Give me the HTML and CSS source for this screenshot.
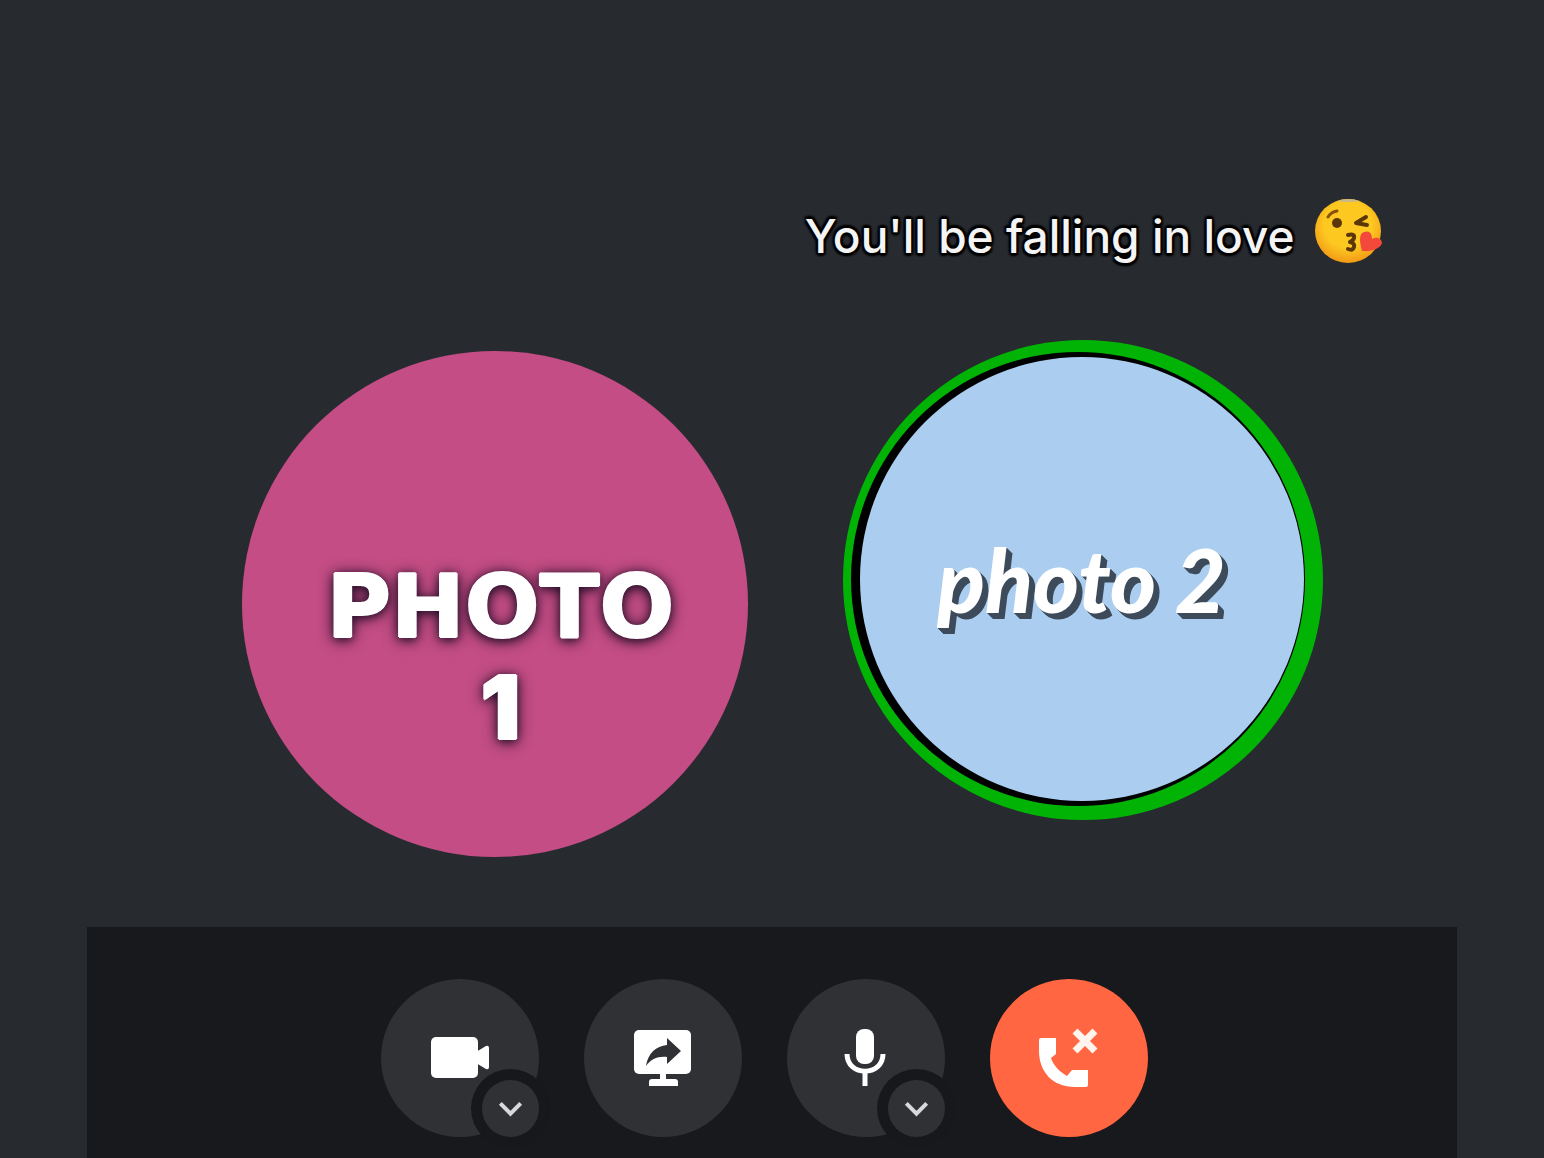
FILE: index.html
```html
<!DOCTYPE html>
<html lang="en">
<head>
<meta charset="utf-8">
<meta name="viewport" content="width=device-width, initial-scale=1">
<title>Video call</title>
<link rel="stylesheet" href="styles.css">
</head>
<body>
<main class="stage">
  <section class="person">
    <div class="avatar avatar-pink"><span>PHOTO</span><span class="digit">1</span></div>
  </section>
  <section class="person person-speaking">
    <p class="caption"><span class="caption-text">You'll be falling in love</span>
      <svg class="emoji" viewBox="0 0 68 68" role="img" aria-label="Face blowing a kiss">
        <defs><radialGradient id="face" cx=".5" cy=".4" r=".6"><stop offset=".6" stop-color="#fdc921"/><stop offset="1" stop-color="#f39a16"/></radialGradient></defs>
        <ellipse cx="33" cy="33" rx="33" ry="32" fill="url(#face)"/>
        <path d="M22 3Q33-1 45 3Q33 5 22 3Z" fill="#c9b98a"/>
        <path d="M13 19Q16 14 22 13" fill="none" stroke="#8a5208" stroke-width="3" stroke-linecap="round"/>
        <ellipse cx="22" cy="25" rx="5" ry="5" fill="#5b3607"/>
        <path d="M51 19L41 25L52 27" fill="none" stroke="#5b3607" stroke-width="4" stroke-linecap="round" stroke-linejoin="round"/>
        <path d="M33 37Q40 35 39 40Q38 43 35 44Q40 45 39 49Q38 53 33 51" fill="none" stroke="#5b3607" stroke-width="4" stroke-linecap="round" stroke-linejoin="round"/>
        <path d="M47 53C45 46 43 36 49 34C54 32 57 35 57 41C62 38 67 41 67 45C66 50 57 54 47 53Z" fill="#f2493b"/>
      </svg>
    </p>
    <div class="ring"><div class="rim"><div class="avatar avatar-blue"><span>photo 2</span></div></div></div>
  </section>
</main>
<footer class="controls">
  <div class="control">
    <button class="round" type="button" aria-label="Camera">
      <svg viewBox="0 0 158 158"><rect x="50" y="58" width="47" height="41" rx="5"/><path d="M95 73L105 67Q108 66 108 69V88Q108 91 105 90L95 84Z"/></svg>
    </button>
    <button class="more" type="button" aria-label="Camera options">
      <svg viewBox="0 0 56 56"><path class="chevron" d="M18 23L28 33L38 23"/></svg>
    </button>
  </div>
  <div class="control">
    <button class="round" type="button" aria-label="Share screen">
      <svg viewBox="0 0 158 158"><rect x="50" y="51" width="57" height="44" rx="5"/><path d="M76 94H82V100H91Q94 100 94 103V107H65V103Q65 100 68 100H76Z"/><path class="arrow" d="M62 87C64 74 72 67 83 66V59L97 72L83 85V78C74 77 67 80 62 87Z"/></svg>
    </button>
  </div>
  <div class="control">
    <button class="round" type="button" aria-label="Microphone">
      <svg viewBox="0 0 158 158"><rect x="69" y="50" width="18" height="35" rx="8"/><path class="line" d="M60 75C60 98 96 98 96 75M78 92V107"/></svg>
    </button>
    <button class="more" type="button" aria-label="Microphone options">
      <svg viewBox="0 0 56 56"><path class="chevron" d="M18 23L28 33L38 23"/></svg>
    </button>
  </div>
  <div class="control">
    <button class="round hang-up" type="button" aria-label="Leave call">
      <svg viewBox="0 0 158 158"><path d="M51 59H66V75L61 79C63 86 70 93 77 97L82 91H98V106Q98 108 96 108H85C63 108 49 93 49 72V61Q49 59 51 59Z"/><path class="cross" d="M85 52L105 72M105 52L85 72"/></svg>
    </button>
  </div>
</footer>
</body>
</html>
```
FILE: styles.css
```css
* {
  box-sizing: border-box;
}

body {
  margin: 0;
  min-height: 100vh;
  display: flex;
  flex-direction: column;
  background: #272a2f;
  color: #fff;
  font-family: Inter, "Liberation Sans", sans-serif;
}

.stage {
  flex: 1;
  display: flex;
  justify-content: center;
  align-items: flex-end;
  gap: 35px;
  padding: 0 0 70px 80px;
}

.person-speaking {
  width: 600px;
  padding-bottom: 37px;
  display: flex;
  flex-direction: column;
  align-items: center;
  gap: 72px;
}

.caption {
  align-self: flex-end;
  margin: 0;
  display: flex;
  align-items: flex-start;
  gap: 20px;
  white-space: nowrap;
  font-size: 46px;
  line-height: 64px;
  font-weight: 500;
  color: #f4f4f5;
  text-shadow: 0 0 2px #000, 2px 2px 2px #000, -2px -2px 2px #000, 2px -2px 2px #000, -2px 2px 2px #000, 0 3px 2px #000, 0 -3px 2px #000;
}

.caption-text {
  padding-top: 6px;
}

.emoji {
  width: 68px;
  height: 68px;
}

.avatar {
  display: flex;
  flex-direction: column;
  justify-content: center;
  align-items: center;
  border-radius: 50%;
}

.avatar-pink {
  width: 506px;
  height: 506px;
  padding: 106px 0 0 12px;
  background: #c34d84;
  font-family: "DejaVu Sans", sans-serif;
  font-size: 88px;
  line-height: 101px;
  font-weight: 700;
  text-shadow: 1px 0 #fff, -1px 0 #fff, 0 1px #fff, 0 -1px #fff, 0 2px 10px #28102a, 0 2px 16px #28102a;
}

.digit {
  font-family: Inter, sans-serif;
  font-weight: 900;
}

.ring {
  width: 480px;
  height: 480px;
  padding: 12px 16px 14px 8px;
  border-radius: 50%;
  background: #00b305;
}

.rim {
  width: 454px;
  height: 454px;
  padding: 5px 1px 5px 9px;
  border-radius: 50%;
  background: #000;
}

.avatar-blue {
  width: 444px;
  height: 444px;
  background: #abcef0;
  font-family: Lato, sans-serif;
  font-size: 88px;
  line-height: 100px;
  font-style: italic;
  font-weight: 900;
  text-shadow: 1px 1px #3d4b5b, 2px 2px #3d4b5b, 3px 3px #3d4b5b, 4px 4px #3d4b5b, 5px 5px #3d4b5b, 6px 6px #3d4b5b;
}

.controls {
  display: flex;
  justify-content: center;
  gap: 45px;
  margin: 0 87px;
  padding: 52px 16px 21px 0;
  background: #17191d;
}

.control {
  position: relative;
}

.round,
.more {
  display: block;
  padding: 0;
  border: 0;
  border-radius: 50%;
  background: #303135;
  color: #fff;
  cursor: pointer;
}

.round {
  width: 158px;
  height: 158px;
}

.more {
  position: absolute;
  right: 0;
  bottom: 0;
  width: 57px;
  height: 57px;
  box-shadow: 0 0 0 11px #16181c;
}

.hang-up {
  background: #ff6641;
}

.controls svg {
  display: block;
  width: 100%;
  height: 100%;
  fill: currentColor;
}

.controls .arrow {
  fill: #303135;
}

.controls .line,
.controls .cross,
.controls .chevron {
  fill: none;
  stroke: #fff;
  stroke-width: 5;
}

.controls .cross {
  stroke: #fff4ee;
  stroke-width: 7;
}

.controls .chevron {
  stroke: #d8d9db;
  stroke-width: 4;
}
```
